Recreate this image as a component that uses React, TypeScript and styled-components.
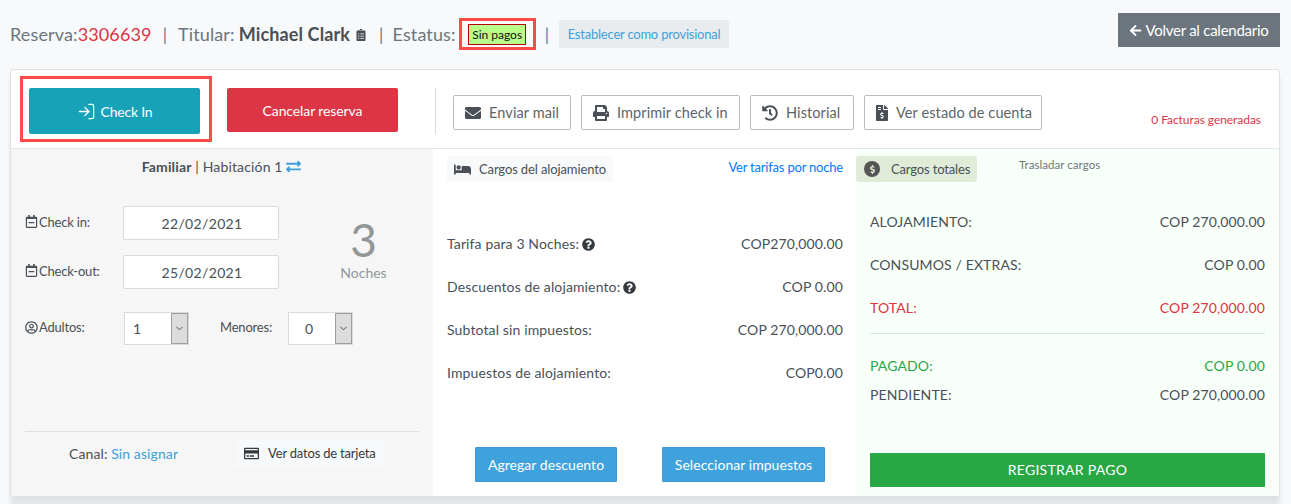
import React from "react";
import styled, { createGlobalStyle } from "styled-components";
import { LogIn, ChevronDown } from "lucide-react";
import {
  FaArrowLeft, FaEnvelope, FaPrint, FaHistory, FaFileInvoiceDollar, FaExchangeAlt, FaBed,
  FaQuestionCircle, FaRegCalendarMinus, FaRegUserCircle, FaClipboardList, FaRegCreditCard,
  FaDollarSign,
} from "react-icons/fa";

const Global = createGlobalStyle`
  html, body { margin: 0; padding: 0; background: #f8f9fa; }
  body { font-family: "Lato", "Liberation Sans", sans-serif; color: #495057; height: 504px; overflow: hidden; }
  * { box-sizing: border-box; }
`;

const Page = styled.div`
  height: 504px; padding: 0 11px 0 10px; display: flex; flex-direction: column;
`;
const Header = styled.header`
  height: 69px; display: flex; align-items: flex-start; justify-content: space-between;
`;
const Title = styled.div`
  display: flex; align-items: center; height: 32px; margin-top: 18px;
  font-size: 18px; color: #6c757d; letter-spacing: .13px; white-space: nowrap;
`;
const Red = styled.span`color: #dc3545;`;
const Name = styled.strong`color: #495057; font-weight: 700; margin-left: 4px;`;
const Sep = styled.span<{ $m?: string; $blue?: boolean }>`
  margin: ${(p) => p.$m ?? "0 11px"}; color: ${(p) => (p.$blue ? "#4a7fa5" : "#6c757d")}; font-size: 17px;
`;
const ClipIcon = styled(FaClipboardList)`font-size: 12px; color: #495057; margin-left: 5px; margin-top: 2px;`;
const Highlight = styled.div`
  border: 3px solid #ff4a4a; flex: none;
`;
const BadgeFrame = styled(Highlight)`
  width: 77px; height: 32px; margin-left: 3px; display: flex; align-items: center; justify-content: center;
`;
const Badge = styled.span`
  width: 58px; height: 21px; background: #b8ff8a; border: 1px solid #b30000; color: #111; letter-spacing: 0;
  font-size: 12px; display: flex; align-items: center; justify-content: center;
`;
const Provisional = styled.span`
  width: 170px; height: 28px; background: #e9ecef; border-radius: 2px; color: #3f9fdb; font-size: 13px; letter-spacing: -.22px;
  display: flex; align-items: center; justify-content: center;
`;
const BackBtn = styled.button`
  width: 162px; height: 34px; margin-top: 13px; border: 0; background: #6c757d; color: #fff;
  font: 400 15px "Lato", sans-serif; letter-spacing: -.25px; display: flex; align-items: center; justify-content: center; gap: 3px; padding: 0;
`;
const Card = styled.section`
  width: 1270px; height: 428px; flex: none; background: #fff; border: 1px solid #dfe1e3; border-radius: 3px;
  box-shadow: 0 8px 4px rgba(0,0,0,.09); display: flex; flex-direction: column; overflow: hidden;
`;
const Toolbar = styled.div`
  height: 79px; flex: none; border-bottom: 1px solid #e3e5e7; display: flex; align-items: flex-start;
  padding: 6px 0 0 9px; position: relative;
`;
const CheckFrame = styled(Highlight)`
  width: 192px; height: 66px; display: flex; align-items: flex-start; padding: 9px 0 0 6px; flex: none;
`;
const CheckBtn = styled.button`
  width: 171px; height: 46px; background: #17a2b8; border: 0; border-radius: 2px; color: #fff;
  font: 400 14px "Lato", sans-serif; letter-spacing: -.2px; display: flex; align-items: center; justify-content: center; gap: 5px; padding: 1px 0 0;
`;
const CancelBtn = styled.button`
  width: 171px; height: 44px; margin: 12px 0 0 15px; flex: none; background: #dc3545; border: 0; border-radius: 2px; color: #fff;
  font: 400 14px "Lato", sans-serif; letter-spacing: -.1px; padding: 0;
`;
const VSep = styled.div`
  width: 1px; height: 46px; background: #d6d8da; margin: 12px 17px 0 37px; flex: none;
`;
const Tools = styled.div`display: flex; gap: 10px; margin-top: 19px;`;
const ToolBtn = styled.button<{ $w: number }>`
  width: ${(p) => p.$w}px; height: 35px; background: #fff; border: 1px solid #b9bcbf; border-radius: 2px; color: #5b646b;
  font: 400 14.5px "Lato", sans-serif; letter-spacing: .1px; display: flex; align-items: center; gap: 8px; padding: 0 0 0 11px; white-space: nowrap;
  svg { color: #495057; font-size: 16px; flex: none; }
`;
const StatementIcon = styled(FaFileInvoiceDollar)`margin: 0 -2px;`;
const Invoices = styled.span`
  position: absolute; right: 18px; top: 42px; font-size: 12px; color: #dc3545; letter-spacing: -.05px;
`;
const Body = styled.div`flex: 1; display: grid; grid-template-columns: 422px 423px 423px; min-height: 0;`;
const Left = styled.div`
  background: #f6f6f6; padding: 0 13px 0 14px; display: flex; flex-direction: column;
`;
const RoomLine = styled.div`
  text-align: center; font-size: 14px; height: 18px; margin-top: 9px; color: #495057; padding-right: 2px; letter-spacing: .15px;
  b { font-weight: 700; }
  svg { color: #3f9fdb; font-size: 15px; vertical-align: -2px; }
`;
const DatesArea = styled.div`
  display: flex; margin-top: 30px;
`;
const Dates = styled.div`display: flex; flex-direction: column; gap: 15px; width: 254px; flex: none;`;
const FieldRow = styled.div`display: flex; align-items: center;`;
const FieldLabel = styled.label<{ $w?: number }>`
  width: ${(p) => p.$w ?? 98}px; flex: none; display: flex; align-items: center; gap: 1px; font-size: 13px; letter-spacing: -.2px; color: #495057; margin-top: -3px;
  svg { font-size: 13px; flex: none; }
`;
const DateInput = styled.input`
  width: 156px; height: 34px; border: 1px solid #d8dadc; border-radius: 2px; background: #fff; text-align: center;
  font: 400 14px "Lato", sans-serif; color: #495057; letter-spacing: .35px; padding: 0 0 0 2px; outline: none;
`;
const Nights = styled.div`
  flex: 1; display: flex; flex-direction: column; align-items: center; color: #919699; padding-left: 28px; margin-top: 11px;
`;
const NightsNum = styled.div`font-size: 46px; line-height: 46px; font-weight: 400;`;
const NightsLabel = styled.div`font-size: 14px; line-height: 18px; margin-top: 1px;`;
const PeopleRow = styled.div`display: flex; align-items: center; margin-top: 23px; height: 33px;`;
const Pick = styled.div`
  width: 65px; height: 33px; display: flex; border: 1px solid #d8dadc; background: #fff; flex: none;
`;
const PickValue = styled.span<{ $pad: number }>`
  flex: 1; display: flex; align-items: center; font-size: 14px; color: #495057; padding-left: ${(p) => p.$pad}px;
`;
const PickArrow = styled.span`
  width: 17px; background: #dcdcdc; border: 1px solid #9e9e9e; display: flex; align-items: center; justify-content: center; color: #444;
`;
const MinorLabel = styled.span`font-size: 13px; letter-spacing: -.2px; color: #495057; margin: -3px 0 0 31px; width: 68px; flex: none;`;
const FootRow = styled.div`
  margin-top: auto; height: 65px; border-top: 1px solid #dfe1e3; display: flex; flex: none;
`;
const Canal = styled.span`
  font-size: 14px; margin: 13px 0 0 44px; color: #495057; letter-spacing: .1px;
  a { color: #3f9fdb; }
`;
const CardLink = styled.span`
  display: flex; align-items: center; gap: 9px; width: 148px; height: 28px; background: #f8f9fa; color: #343a40;
  font-size: 13px; letter-spacing: -.2px; padding-left: 8px; margin: 7px 0 0 58px; white-space: nowrap;
  svg { font-size: 15px; flex: none; }
`;
const Middle = styled.div`padding: 7px 13px 0 14px; display: flex; flex-direction: column;`;
const PanelHead = styled.div`display: flex; justify-content: space-between; align-items: flex-start; height: 26px;`;
const Pill = styled.span`
  height: 26px; display: flex; align-items: center; gap: 8px; border-radius: 3px; background: #f8f9fa; color: #495057;
  font-size: 13px; letter-spacing: -.12px; padding: 0 7px;
  svg { font-size: 17px; color: #495057; }
`;
const RateLink = styled.a`color: #007bff; font-size: 13px; letter-spacing: -.2px; margin-top: 3px;`;
const Lines = styled.div`display: flex; flex-direction: column; gap: 25px; margin-top: 53px;`;
const Line = styled.div`
  display: flex; justify-content: space-between; font-size: 14px; height: 18px; line-height: 18px; color: #495057; letter-spacing: .13px;
  svg { font-size: 13px; vertical-align: -2px; color: #343a40; margin-left: 3px; }
`;
const BtnRow = styled.div`
  margin-top: auto; display: flex; gap: 45px; padding: 0 0 14px 28px;
`;
const BlueBtn = styled.button<{ $w: number }>`
  width: ${(p) => p.$w}px; height: 35px; padding: 0; background: #3fa2dd; border: 1px solid #3b98d0; border-radius: 1px; color: #fff;
  font: 400 14px "Lato", sans-serif; letter-spacing: .05px;
`;
const Right = styled.div`background: #f9fff9; padding: 7px 14px 0 14px; display: flex; flex-direction: column;`;
const TotalsHead = styled.div`display: flex; align-items: flex-start; height: 26px; margin-left: -14px;`;
const GreenPill = styled(Pill)`
  width: 121px; background: #e0ecd8; padding: 0 0 0 8px; gap: 11px; flex: none; letter-spacing: -.15px;
`;
const DollarDot = styled.span`
  width: 16px; height: 16px; border-radius: 50%; background: #555; display: flex; align-items: center; justify-content: center;
  svg { font-size: 9px; color: #e0ecd8; }
`;
const Transfer = styled.span`font-size: 11.5px; letter-spacing: .05px; color: #6c757d; margin: 2px 0 0 42px;`;
const Total = styled.div<{ $c?: string; $mt: number }>`
  display: flex; justify-content: space-between; font-size: 14px; height: 18px; line-height: 18px; letter-spacing: .13px;
  color: ${(p) => p.$c ?? "#495057"}; margin-top: ${(p) => p.$mt}px;
`;
const Rule = styled.div`height: 1px; background: #dfe3dd; margin-top: 16px;`;
const PayBtn = styled.button`
  margin-top: auto; margin-bottom: 9px; height: 34px; width: 100%; background: #28a745; border: 0; border-radius: 1px;
  color: #fff; font: 400 14px "Lato", sans-serif; letter-spacing: .28px; padding: 0 0 2px;
`;

export default function App() {
  return (
    <Page>
      <Global />
      <Header>
        <Title>
          Reserva:<Red>3306639</Red><Sep>|</Sep>Titular: <Name>Michael Clark</Name><ClipIcon />
          <Sep $m="0 9px 0 12px">|</Sep>Estatus:
          <BadgeFrame><Badge>Sin pagos</Badge></BadgeFrame>
          <Sep $blue $m="0 10px 0 9px">|</Sep>
          <Provisional>Establecer como provisional</Provisional>
        </Title>
        <BackBtn><FaArrowLeft size={13} />Volver al calendario</BackBtn>
      </Header>
      <Card>
        <Toolbar>
          <CheckFrame><CheckBtn><LogIn size={19} strokeWidth={1.6} />Check In</CheckBtn></CheckFrame>
          <CancelBtn>Cancelar reserva</CancelBtn>
          <VSep />
          <Tools>
            <ToolBtn $w={118}><FaEnvelope />Enviar mail</ToolBtn>
            <ToolBtn $w={159}><FaPrint />Imprimir check in</ToolBtn>
            <ToolBtn $w={104}><FaHistory />Historial</ToolBtn>
            <ToolBtn $w={178}><StatementIcon />Ver estado de cuenta</ToolBtn>
          </Tools>
          <Invoices>0 Facturas generadas</Invoices>
        </Toolbar>
        <Body>
          <Left>
            <RoomLine><b>Familiar</b> | Habitación 1 <FaExchangeAlt /></RoomLine>
            <DatesArea>
              <Dates>
                <FieldRow>
                  <FieldLabel><FaRegCalendarMinus />Check in:</FieldLabel>
                  <DateInput readOnly value="22/02/2021" />
                </FieldRow>
                <FieldRow>
                  <FieldLabel><FaRegCalendarMinus />Check-out:</FieldLabel>
                  <DateInput readOnly value="25/02/2021" />
                </FieldRow>
              </Dates>
              <Nights>
                <NightsNum>3</NightsNum>
                <NightsLabel>Noches</NightsLabel>
              </Nights>
            </DatesArea>
            <PeopleRow>
              <FieldLabel $w={99}><FaRegUserCircle />Adultos:</FieldLabel>
              <Pick><PickValue $pad={8}>1</PickValue><PickArrow><ChevronDown size={11} /></PickArrow></Pick>
              <MinorLabel>Menores:</MinorLabel>
              <Pick><PickValue $pad={16}>0</PickValue><PickArrow><ChevronDown size={11} /></PickArrow></Pick>
            </PeopleRow>
            <FootRow>
              <Canal>Canal: <a>Sin asignar</a></Canal>
              <CardLink><FaRegCreditCard />Ver datos de tarjeta</CardLink>
            </FootRow>
          </Left>
          <Middle>
            <PanelHead>
              <Pill><FaBed />Cargos del alojamiento</Pill>
              <RateLink>Ver tarifas por noche</RateLink>
            </PanelHead>
            <Lines>
              <Line><span>Tarifa para 3 Noches:<FaQuestionCircle /></span><span>COP270,000.00</span></Line>
              <Line><span>Descuentos de alojamiento:<FaQuestionCircle /></span><span>COP 0.00</span></Line>
              <Line><span>Subtotal sin impuestos:</span><span>COP 270,000.00</span></Line>
              <Line><span>Impuestos de alojamiento:</span><span>COP0.00</span></Line>
            </Lines>
            <BtnRow>
              <BlueBtn $w={142}>Agregar descuento</BlueBtn>
              <BlueBtn $w={163}>Seleccionar impuestos</BlueBtn>
            </BtnRow>
          </Middle>
          <Right>
            <TotalsHead>
              <GreenPill><DollarDot><FaDollarSign /></DollarDot>Cargos totales</GreenPill>
              <Transfer>Trasladar cargos</Transfer>
            </TotalsHead>
            <Total $mt={31}><span>ALOJAMIENTO:</span><span>COP 270,000.00</span></Total>
            <Total $mt={25}><span>CONSUMOS / EXTRAS:</span><span>COP 0.00</span></Total>
            <Total $mt={25} $c="#dc3545"><span>TOTAL:</span><span>COP 270,000.00</span></Total>
            <Rule />
            <Total $mt={23} $c="#28a745"><span>PAGADO:</span><span>COP 0.00</span></Total>
            <Total $mt={11}><span>PENDIENTE:</span><span>COP 270,000.00</span></Total>
            <PayBtn>REGISTRAR PAGO</PayBtn>
          </Right>
        </Body>
      </Card>
    </Page>
  );
}
